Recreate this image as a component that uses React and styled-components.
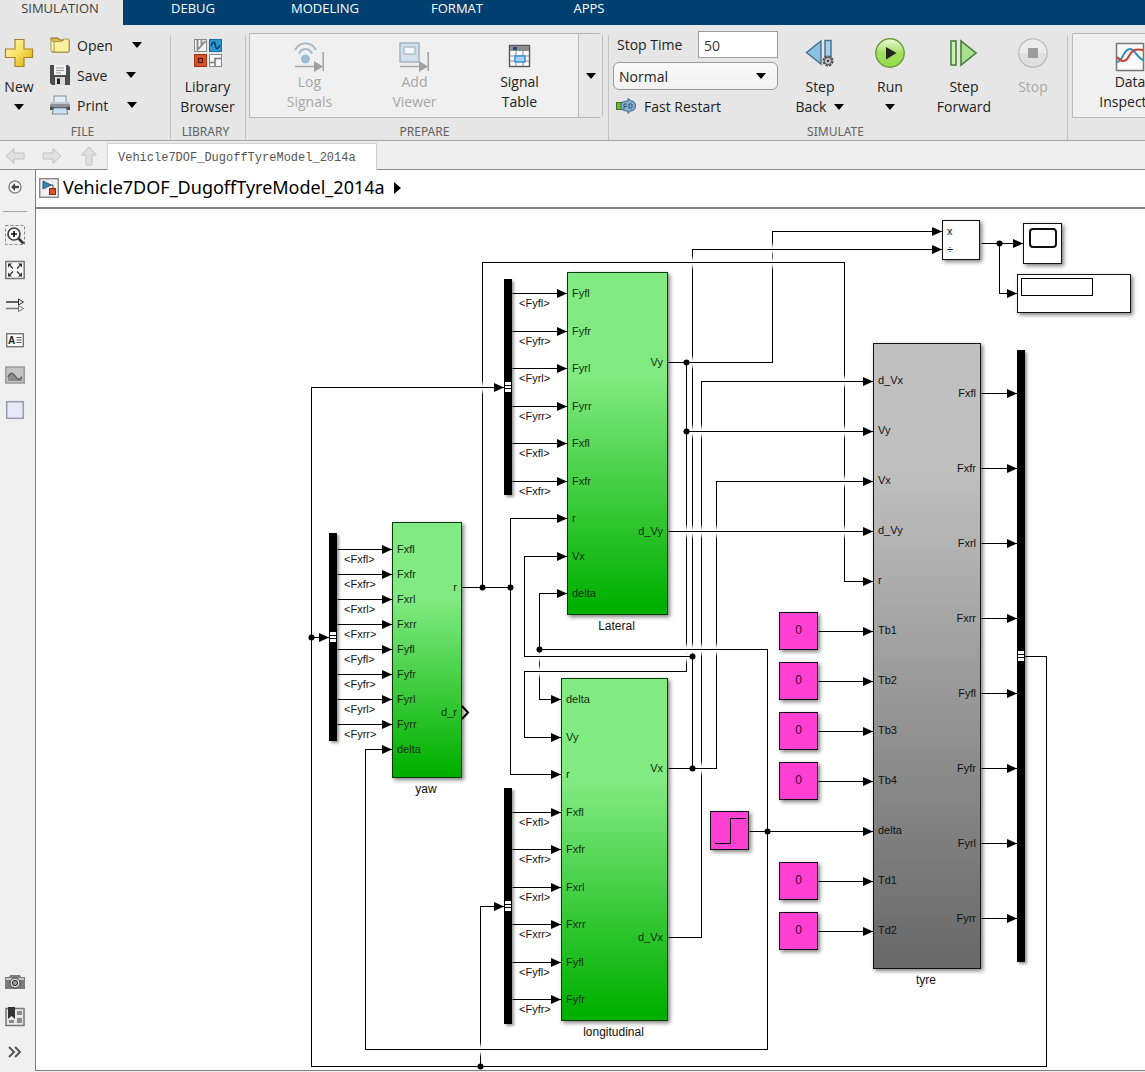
import React, { useState } from 'react';
import styled, { createGlobalStyle } from 'styled-components';

const GlobalStyle = createGlobalStyle`
  * {
    box-sizing: border-box;
  }
  body {
    margin: 0;
    background: #efefef;
    color: #1e1e1e;
    font-family: "Open Sans", "Noto Sans", sans-serif;
    font-size: 14px;
    overflow: hidden;
  }
  button {
    border: none;
    background: none;
    padding: 0;
    color: inherit;
    font: inherit;
    cursor: pointer;
  }
  svg {
    display: block;
    flex: none;
  }
`

const Page = styled.div`
  display: flex;
  flex-direction: column;
  min-height: 100vh;
`

const TabBar = styled.nav`
  display: flex;
  height: 25px;
  background: #004071;
`

const RibbonTab = styled.button`
  width: ${p => (p.$active ? 123 : 132)}px;
  margin-right: ${p => (p.$active ? 4 : 0)}px;
  padding: ${p => (p.$active ? '0 3px 9px 0' : '0 0 9px 0')};
  line-height: 16px;
  font-size: 13px;
  color: ${p => (p.$active ? '#3c3c3c' : '#fff')};
  background: ${p => (p.$active ? '#e7e7e7' : 'transparent')};
`

const Ribbon = styled.header`
  display: flex;
  height: 116px;
  background: #e6e6e6;
  border-bottom: 1px solid #a3a3a3;
  overflow: hidden;
`

const Group = styled.section`
  display: flex;
  flex-direction: column;
  flex: none;
  width: ${p => p.$width}px;
  background: linear-gradient(#c4c4c4, #c4c4c4) right bottom / 1px 105px no-repeat;
`

const GroupBody = styled.div`
  display: flex;
  align-items: flex-start;
  height: 98px;
  padding: ${p => p.$pad};
`

const GroupLabel = styled.div`
  line-height: 18px;
  height: 17px;
  font-family: "Noto Sans", sans-serif;
  font-size: 12px;
  padding-right: 6px;
  text-align: center;
  color: #626262;
`

const BigButton = styled.button`
  display: flex;
  flex-direction: column;
  align-items: center;
  flex: none;
  width: ${p => p.$width}px;
  line-height: 20px;
  color: ${p => (p.disabled ? '#a8a8a8' : '#222')};
  svg.icon {
    margin-bottom: ${p => (p.$gallery ? 0 : 9)}px;
  }
`

const CaretLine = styled.span`
  display: flex;
  align-items: center;
  justify-content: center;
  gap: 8px;
  height: 20px;
`

const NewButton = styled(BigButton)`
  margin-top: 8px;
`

const FileList = styled.div`
  display: flex;
  flex-direction: column;
  padding-left: 12px;
`

const FileButton = styled.button`
  display: flex;
  align-items: center;
  height: 30px;
  span {
    margin: 0 19px 0 7px;
  }
`

const Gallery = styled.div`
  display: flex;
  flex: none;
  width: ${p => p.$width}px;
  height: 85px;
  background: #f0f0f0;
  border: 1px solid #b9b9b9;
  border-radius: 0 4px 4px 0;
`

const GalleryItems = styled.div`
  display: flex;
  flex: 1;
  padding: 8px 0 0 7px;
`

const GalleryMore = styled.button`
  display: flex;
  align-items: center;
  justify-content: center;
  width: 24px;
  background: #e8e8e8;
  border-left: 1px solid #b9b9b9;
`

const SimForm = styled.form`
  display: flex;
  flex-direction: column;
  width: 165px;
  margin-right: 7px;
`

const StopRow = styled.div`
  display: flex;
  align-items: center;
  justify-content: space-between;
  padding-left: 4px;
`

const StopInput = styled.input`
  width: 80px;
  height: 27px;
  padding: 2px 5px 0;
  border: 1px solid #9d9d9d;
  background: #fff;
  font: inherit;
  color: #333;
`

const SelectBox = styled.div`
  display: grid;
  margin-top: 4px;
  align-items: center;
  > * {
    grid-area: 1 / 1;
  }
  svg {
    justify-self: end;
    margin-right: 12px;
    pointer-events: none;
  }
`

const ModeSelect = styled.select`
  appearance: none;
  width: 100%;
  height: 28px;
  padding: 0 5px;
  border: 1px solid #9a9a9a;
  border-radius: 6px;
  background: linear-gradient(#fafafa, #f1f1f1);
  font: inherit;
  color: #222;
`

const RestartButton = styled.button`
  display: flex;
  align-items: center;
  gap: 8px;
  height: 32px;
  padding-left: 3px;
`

const RunControls = styled.div`
  display: flex;
  padding-top: 7px;
`

const FileBar = styled.div`
  display: flex;
  height: 29px;
  background: #efefef;
  border-bottom: 1px solid #8a8a8a;
`

const NavButtons = styled.div`
  display: flex;
  align-items: center;
  gap: 17px;
  width: 107px;
  padding: 2px 0 0 5px;
`

const FileTab = styled.button`
  margin-top: 2px;
  padding: 2px 10px 0;
  height: 27px;
  width: 270px;
  text-align: left;
  border: 1px solid #d0d0d0;
  border-bottom: none;
  background: #fff;
  font-family: "Liberation Mono", monospace;
  font-size: 12px;
  color: #555;
`

const Workspace = styled.div`
  display: flex;
  flex: 1;
`

const Palette = styled.aside`
  display: flex;
  flex-direction: column;
  align-items: center;
  width: 35px;
  padding: 8px 5px 10px 0;
  gap: 15px;
  background: #f0f0f0;
`

const PaletteRule = styled.hr`
  width: 24px;
  margin: -2px 0;
  border: none;
  border-top: 1px solid #a8a8a8;
`

const PaletteSpacer = styled.div`
  flex: 1;
`

const Editor = styled.main`
  display: flex;
  flex-direction: column;
  flex: 1;
  min-width: 0;
  margin-bottom: 1px;
  border: 1px solid #808080;
  border-width: 0 0 1px 1px;
`

const Breadcrumb = styled.div`
  display: flex;
  align-items: center;
  gap: 4px;
  height: 39px;
  padding: 0 0 2px 3px;
  font-family: "Noto Sans", sans-serif;
  font-size: 18px;
  line-height: 22px;
  color: #000;
  background: #fff;
  border-bottom: 2px solid #868686;
  svg:last-child {
    margin-left: 5px;
  }
`

const Crumb = styled.a`
  padding-bottom: 2px;
  color: inherit;
  text-decoration: none;
`

// free canvas: blocks are placed by their sheet coordinates
const Canvas = styled.div`
  position: relative;
  flex: 1;
  min-height: 861px;
  overflow: hidden;
  background: #fff;
  font-family: "Liberation Sans", Arial, sans-serif;
  font-size: 11px;
  line-height: 12px;
  color: #111;
`

const Sheet = styled.div`
  position: absolute;
  left: -36px;
  top: -209px;
  width: 1200px;
  height: 1100px;
`

const Wires = styled.svg`
  position: absolute;
  left: 0;
  top: 0;
`

const fills = {
  green: 'linear-gradient(#82ea82 0%, #82ea82 30%, #00b000 98%)',
  gray: 'linear-gradient(#c0c0c0 0%, #c0c0c0 20%, #6a6a6a 98%)',
  pink: '#ff40d2',
  white: '#fff',
}

const Block = styled.div`
  position: absolute;
  left: ${p => p.$x}px;
  top: ${p => p.$y}px;
  width: ${p => p.$w}px;
  height: ${p => p.$h}px;
  display: flex;
  align-items: center;
  justify-content: center;
  border: 1px solid ${p => (p.$fill === 'green' ? '#0a3a0a' : '#111')};
  background: ${p => fills[p.$fill]};
  box-shadow: 2px 2px 4px rgba(0, 0, 0, 0.5);
`

const ConstantValue = styled.span`
  padding-bottom: 2px;
  font-size: 12px;
  color: #400030;
`

const BlockName = styled.div`
  position: absolute;
  left: ${p => p.$x}px;
  top: ${p => p.$y}px;
  width: ${p => p.$w}px;
  text-align: center;
  font-size: 12px;
  line-height: 14px;
`

const Port = styled.span`
  position: absolute;
  ${p => (p.$out ? 'right: 4px;' : 'left: 4px;')}
  top: ${p => p.$y}px;
  color: ${p => (p.$dark ? '#111' : '#103010')};
`

const Bar = styled.div`
  position: absolute;
  left: ${p => p.$x}px;
  top: ${p => p.$y}px;
  width: 8px;
  height: ${p => p.$h}px;
  background: #000;
  box-shadow: 2px 2px 3px rgba(0, 0, 0, 0.4);
`

const Notch = styled.svg`
  position: absolute;
  left: 0;
  top: ${p => p.$y}px;
`

const SignalLabel = styled.span`
  position: absolute;
  left: ${p => p.$x}px;
  top: ${p => p.$y}px;
`

const ScreenFace = styled.div`
  align-self: flex-start;
  margin-top: 4px;
  width: 28px;
  height: 20px;
  border: 2px solid #111;
  border-radius: 4px;
`

const DisplayFace = styled.div`
  align-self: flex-start;
  margin: 3px auto 0 3px;
  width: 72px;
  height: 18px;
  border: 1px solid #000;
`

const Caret = () => (
  <svg width="10" height="6" viewBox="0 0 10 6"><path d="M0 0h10L5 6z" fill="#000" /></svg>
)

const NewIcon = () => (
  <svg className="icon" width="30" height="30" viewBox="0 0 30 30">
    <defs>
      <linearGradient id="gold" x1="0" y1="0" x2="1" y2="1">
        <stop offset="0" stopColor="#fff8c0" />
        <stop offset="0.5" stopColor="#f8e060" />
        <stop offset="1" stopColor="#d8a800" />
      </linearGradient>
    </defs>
    <path d="M11 1.500h9v9.500h8.500v8.500H20v9h-9v-9H1.500V11H11z" fill="url(#gold)" stroke="#a8822a" strokeWidth="1.200" />
  </svg>
)

const OpenIcon = () => (
  <svg width="20" height="18" viewBox="0 0 20 18">
    <path d="M1 2h7l2 2h9v12H2z" fill="#d8b850" stroke="#8a7020" />
    <path d="M3 6l10-1 .5-2L19 3v13H4z" fill="#fbf0a0" stroke="#a08838" strokeWidth=".8" />
    <path d="M1 2l3 5v10L1 14z" fill="#fff6bc" stroke="#a08838" strokeWidth=".8" />
  </svg>
)

const SaveIcon = () => (
  <svg width="20" height="20" viewBox="0 0 20 20">
    <path d="M0 0h18l2 2v18H2l-2-2z" fill="#4c4c4c" />
    <path d="M4 0h12v10H4z" fill="#f4f4f4" />
    <path d="M6 3h8M6 5.500h8M6 8h5" stroke="#999" />
    <path d="M5 12h10v8H5z" fill="#d8d8d8" />
    <path d="M7 13.500h3V19H7z" fill="#222" />
  </svg>
)

const PrintIcon = () => (
  <svg width="20" height="20" viewBox="0 0 20 20">
    <path d="M4 1h12v8H4z" fill="#e4f0f8" stroke="#7e8e9a" />
    <path d="M2 7h16l2 3v5H0v-5z" fill="#8a9096" />
    <path d="M2 7h16l1 2H1z" fill="#c4c8cc" />
    <path d="M0 12h20v3H0z" fill="#4a4e52" />
    <path d="M4 13h12l2 6H2z" fill="#c8e0f4" stroke="#7e8e9a" />
  </svg>
)

const LibraryIcon = () => (
  <svg className="icon" width="30" height="30" viewBox="0 0 30 30">
    <rect x="1.500" y="1.500" width="12" height="12" fill="#f2f2f2" stroke="#8a8a8a" />
    <path d="M4.500 2v10l8-9M8.500 2v5" fill="none" stroke="#888" strokeWidth="1.800" />
    <rect x="16.500" y="1.500" width="12" height="12" fill="#2c96cc" stroke="#1c6c9c" />
    <path d="M18 8c2-6 4-4 4.500 0s3 3 4.500-1" fill="none" stroke="#0a3c64" strokeWidth="1.500" />
    <rect x="1.500" y="16.500" width="12" height="12" fill="#d8502c" stroke="#a03418" />
    <rect x="5.500" y="20.500" width="4" height="4" fill="none" stroke="#5c1404" strokeWidth="1.200" />
    <rect x="16.500" y="16.500" width="12" height="12" fill="#f6f6f6" stroke="#8a8a8a" />
    <path d="M17 24.500h5v-4h6M22 25v3" fill="none" stroke="#777" strokeWidth="1.500" />
  </svg>
)

const SinkArrow = () => (
  <g fill="none" stroke="#a6a6a6" strokeWidth="1.600">
    <path d="M1 24.500h20M29.200 10v19" />
    <path d="M20 19v11l9-5.500z" fill="#a0a0a0" stroke="none" />
  </g>
)

const LogIcon = () => (
  <svg className="icon" width="31" height="30" viewBox="0 0 31 30">
    <g fill="none" stroke="#a8bccb" strokeWidth="2.200">
      <path d="M1 8C6-1 17-1 22 8" />
      <path d="M5 11.500c3-6 10-6 13 0" />
    </g>
    <circle cx="11.500" cy="17" r="4.500" fill="#9cbcd2" />
    <SinkArrow />
  </svg>
)

const ViewerIcon = () => (
  <svg className="icon" width="31" height="30" viewBox="0 0 31 30">
    <rect x="1" y="1" width="19" height="19" fill="#d3e0ea" stroke="#a3b3c0" strokeWidth="1.500" />
    <rect x="5" y="5" width="11" height="7" fill="#f4f7fa" stroke="#a3b3c0" strokeWidth="1.200" />
    <SinkArrow />
  </svg>
)

const TableIcon = () => (
  <svg className="icon" width="31" height="30" viewBox="0 0 31 30">
    <rect x="5.500" y="3.500" width="20" height="21" fill="#fff" stroke="#555" strokeWidth="1.400" />
    <path d="M6 4h19v5H6z" fill="#8c8c8c" />
    <rect x="9" y="5" width="4" height="3" fill="#1c4c8c" />
    <path d="M6 14h19M6 19h19M12 9v15M19 9v15" stroke="#888" />
    <rect x="11" y="14" width="10" height="6" fill="#a8d4ff" stroke="#3c8cdc" strokeWidth="1.500" />
  </svg>
)

const RestartIcon = () => (
  <svg width="20" height="16" viewBox="0 0 20 16">
    <rect x="0.500" y="4.500" width="6" height="7" fill="#6cb43c" stroke="#3c7420" />
    <path d="M5 8c0-4 3-5 7-5V.500L15 3c3 0 4.500 2 4.500 5s-2 5-5 5L12 15.500V13c-4 0-7-1-7-5z" fill="#86aed0" stroke="#3c6488" />
    <path d="M8 11V6h3M8 8.500h3M13 6v4h3V6h-3" fill="none" stroke="#2c5478" />
  </svg>
)

const StepBackIcon = () => (
  <svg className="icon" width="30" height="30" viewBox="0 0 30 30">
    <path d="M16 3v23L1.500 14.500z" fill="#8cc0e0" stroke="#44708c" strokeWidth="1.400" />
    <rect x="20" y="2.500" width="6" height="20" fill="#a4d0ec" stroke="#44708c" strokeWidth="1.400" />
    <circle cx="23" cy="23" r="4.500" fill="#ddd" stroke="#4c4c4c" strokeWidth="2" strokeDasharray="2.500 1" />
    <circle cx="23" cy="23" r="3.500" fill="#ddd" stroke="#4c4c4c" />
    <circle cx="23" cy="23" r="1.400" fill="#444" />
  </svg>
)

const RunIcon = () => (
  <svg className="icon" width="30" height="30" viewBox="0 0 30 30">
    <defs>
      <linearGradient id="run" x1="0" y1="0" x2="0" y2="1">
        <stop offset="0" stopColor="#ecfadc" />
        <stop offset="0.5" stopColor="#a4e060" />
        <stop offset="1" stopColor="#94dc44" />
      </linearGradient>
    </defs>
    <circle cx="15" cy="15" r="14.200" fill="url(#run)" stroke="#6c9c3c" strokeWidth="1.400" />
    <path d="M11 9v12.500L21.500 15z" fill="#222" />
  </svg>
)

const StepForwardIcon = () => (
  <svg className="icon" width="30" height="30" viewBox="0 0 30 30">
    <rect x="2" y="3" width="5" height="24" fill="#c8f0b4" stroke="#4c7c40" strokeWidth="1.600" />
    <path d="M12 3v24l15-12z" fill="#a8e08c" stroke="#4c7c40" strokeWidth="1.600" />
  </svg>
)

const StopIcon = () => (
  <svg className="icon" width="30" height="30" viewBox="0 0 30 30">
    <circle cx="15" cy="15" r="14.200" fill="#e0e0e0" stroke="#b8b8b8" strokeWidth="1.200" />
    <path d="M1.500 15a13.500 13.500 0 0 1 27 0z" fill="#ececec" />
    <rect x="10" y="10" width="10" height="10" fill="#9c9c9c" />
  </svg>
)

const InspectorIcon = () => (
  <svg className="icon" width="30" height="30" viewBox="0 0 30 30">
    <rect x="1.500" y="1.500" width="27" height="27" fill="#fafafa" stroke="#777" strokeWidth="1.500" />
    <path d="M2 20c6 0 6-13 13-13 5 0 7 9 13 11" fill="none" stroke="#2c8cc4" strokeWidth="2" />
    <path d="M2 15c5 6 9 5 12-1 3-5 5-8 14-6" fill="none" stroke="#cc3c34" strokeWidth="2" />
  </svg>
)

const NavArrow = ({ turn = 0 }) => (
  <svg width="20" height="20" viewBox="0 0 20 20">
    <path d="M1 10l8-7.500V7h10v6H9v4.500z" fill="#e0e0e0" stroke="#c4c4c4" transform={`rotate(${turn} 10 10)`} />
  </svg>
)

const ModelIcon = () => (
  <svg width="20" height="20" viewBox="0 0 20 20">
    <rect x="0.700" y="0.700" width="18.600" height="18.600" fill="#f0f0f0" stroke="#8a8a8a" strokeWidth="1.400" />
    <path d="M4 3v8l8-4z" fill="#3c88b4" stroke="#20587c" />
    <path d="M11 7h3v4" fill="none" stroke="#444" />
    <rect x="10.500" y="10.500" width="6" height="6" fill="#d8502c" stroke="#8c2c10" />
  </svg>
)

const NextIcon = () => (
  <svg width="7" height="12" viewBox="0 0 7 12"><path d="M0 0v12l7-6z" /></svg>
)

const BackCircle = () => (
  <svg width="20" height="20" viewBox="0 0 20 20">
    <circle cx="10" cy="9" r="6" fill="#fff" stroke="#888" strokeWidth="1.500" />
    <path d="M6 9l4-4v2.800h4v2.400h-4V13z" fill="#444" />
  </svg>
)

const ZoomIcon = () => (
  <svg width="20" height="20" viewBox="0 0 20 20">
    <path d="M.5 .5h19v19H.5z" fill="none" stroke="#888" strokeDasharray="3 2" />
    <path d="M13 13l5.500 5.500" stroke="#333" strokeWidth="2.500" />
    <circle cx="9" cy="9" r="6" fill="#fff" stroke="#444" strokeWidth="1.700" />
    <path d="M9 6v6M6 9h6" stroke="#111" strokeWidth="1.700" />
  </svg>
)

const FitIcon = () => (
  <svg width="20" height="20" viewBox="0 0 20 20">
    <rect x=".8" y="1.500" width="18.400" height="17" fill="#f6f6f6" stroke="#777" strokeWidth="1.500" />
    <path d="M3 3.500h4L3 7.500zM17 3.500h-4l4 4zM3 16.500h4l-4-4zM17 16.500h-4l4-4z" fill="#333" />
    <path d="M5 5.500l3 3M15 5.500l-3 3M5 14.500l3-3M15 14.500l-3-3" stroke="#333" strokeWidth="1.200" />
  </svg>
)

const LinesIcon = () => (
  <svg width="20" height="20" viewBox="0 0 20 20">
    <path d="M1 7h13" stroke="#333" strokeWidth="1.500" />
    <path d="M1 13.500h13" stroke="#777" strokeWidth="1.500" />
    <path d="M13.500 4l5 3-5 3z" fill="#eee" stroke="#333" />
    <path d="M13.500 10.500l5 3-5 3z" fill="#eee" stroke="#777" />
  </svg>
)

const NoteIcon = () => (
  <svg width="20" height="20" viewBox="0 0 20 20">
    <rect x="1.700" y="3.700" width="16.600" height="13" fill="#fafafa" stroke="#777" strokeWidth="1.400" />
    <text x="3" y="14" fontSize="10" fontWeight="700" fontFamily="Liberation Sans" fill="#222">A</text>
    <path d="M11.500 7.500h5M11.500 10h5M11.500 12.500h5" stroke="#555" />
  </svg>
)

const ImageIcon = () => (
  <svg width="20" height="20" viewBox="0 0 20 20">
    <rect x=".8" y="2" width="18.400" height="16" fill="#c4c4c4" stroke="#999" strokeWidth="1.500" />
    <path d="M3 13c3-8 6-4 8-1s4 2 6-1v5H3z" fill="#8c8c8c" />
    <path d="M3 12c3-6 5-4 8 0s4 2 6 0" fill="none" stroke="#555" strokeWidth="1.200" />
  </svg>
)

const AreaIcon = () => (
  <svg width="20" height="20" viewBox="0 0 20 20">
    <rect x="1.700" y="1.700" width="16.600" height="16.600" fill="#e8e8fa" stroke="#9a9aac" strokeWidth="1.500" />
  </svg>
)

const CameraIcon = () => (
  <svg width="20" height="20" viewBox="0 0 20 20">
    <path d="M0 5h4l1-2h10l1 2h4v12H0z" fill="#7c7c7c" />
    <path d="M1 6h18v2H1z" fill="#c8c8c8" />
    <circle cx="10" cy="11" r="5" fill="#e0e0e0" stroke="#444" />
    <circle cx="10" cy="11" r="2.700" fill="#999" stroke="#333" />
  </svg>
)

const BookmarkIcon = () => (
  <svg width="20" height="20" viewBox="0 0 20 20">
    <rect x="1" y="1.500" width="18" height="17" fill="#e8e8e8" stroke="#777" strokeWidth="1.500" />
    <path d="M3 0h7v12l-3.500-3L3 12z" fill="#333" />
    <path d="M12 4h5v4h-5zM12 11h5v5h-5zM4 13h5v3H4z" fill="#8a8a8a" />
  </svg>
)

const MoreIcon = () => (
  <svg width="20" height="20" viewBox="0 0 20 20">
    <path d="M4 5l5 5-5 5M10 5l5 5-5 5" fill="none" stroke="#555" strokeWidth="2" />
  </svg>
)

const yawIn = ['Fxfl', 'Fxfr', 'Fxrl', 'Fxrr', 'Fyfl', 'Fyfr', 'Fyrl', 'Fyrr', 'delta'].map((name, i) => ({ name, y: 549 + 25 * i }))
const latIn = ['Fyfl', 'Fyfr', 'Fyrl', 'Fyrr', 'Fxfl', 'Fxfr', 'r', 'Vx', 'delta'].map((name, i) => ({ name, y: Math.floor(293.5 + 37.5 * i) }))
const lonIn = ['delta', 'Vy', 'r', 'Fxfl', 'Fxfr', 'Fxrl', 'Fxrr', 'Fyfl', 'Fyfr'].map((name, i) => ({ name, y: Math.floor(699.5 + 37.5 * i) }))
const tyreIn = ['d_Vx', 'Vy', 'Vx', 'd_Vy', 'r', 'Tb1', 'Tb2', 'Tb3', 'Tb4', 'delta', 'Td1', 'Td2'].map((name, i) => ({ name, y: 380 + 50 * i }))
const tyreOut = ['Fxfl', 'Fxfr', 'Fxrl', 'Fxrr', 'Fyfl', 'Fyfr', 'Fyrl', 'Fyrr'].map((name, i) => ({ name, y: 393 + 75 * i }))

const subsystems = [
  { name: 'yaw', x: 392, y: 522, w: 70, h: 256, fill: 'green', ins: yawIn, outs: [{ name: 'r', y: 587 }, { name: 'd_r', y: 712 }] },
  { name: 'Lateral', x: 567, y: 272, w: 101, h: 343, fill: 'green', ins: latIn, outs: [{ name: 'Vy', y: 362 }, { name: 'd_Vy', y: 531 }] },
  { name: 'longitudinal', x: 561, y: 678, w: 107, h: 343, fill: 'green', ins: lonIn, outs: [{ name: 'Vx', y: 768 }, { name: 'd_Vx', y: 937 }] },
  { name: 'tyre', x: 873, y: 343, w: 108, h: 626, fill: 'gray', ins: tyreIn, outs: tyreOut },
]

const constants = [631, 681, 731, 781, 881, 931]

const selectors = [
  { x: 329, y: 533, h: 208, to: 392, notch: 637, taps: yawIn.slice(0, 8) },
  { x: 504, y: 279, h: 216, to: 567, notch: 387, taps: latIn.slice(0, 6) },
  { x: 504, y: 788, h: 236, to: 561, notch: 906, taps: lonIn.slice(3) },
]

// every net is a list of polylines, each one finishing in an arrow head
const nets = [
  { lines: [[462, 587, 510, 587, 510, 518, 567, 518], [510, 587, 510, 774, 561, 774], [482, 587, 482, 262, 844, 262, 844, 581, 873, 581]], dots: [[482, 587], [510, 587]] },
  { lines: [[668, 362, 772, 362, 772, 231, 942, 231], [686, 362, 686, 671, 524, 671, 524, 737, 561, 737], [686, 431, 873, 431]], dots: [[686, 362], [686, 431]] },
  { lines: [[668, 768, 716, 768, 716, 481, 873, 481], [692, 768, 692, 249, 942, 249], [692, 656, 524, 656, 524, 556, 567, 556]], dots: [[692, 768], [692, 656]] },
  { lines: [[668, 937, 701, 937, 701, 381, 873, 381]], dots: [] },
  { lines: [[668, 531, 873, 531]], dots: [] },
  { lines: [[749, 831, 873, 831], [767, 831, 767, 649, 539, 649, 539, 593, 567, 593], [539, 649, 539, 699, 561, 699], [767, 831, 767, 1049, 365, 1049, 365, 749, 392, 749]], dots: [[767, 831], [539, 649]] },
  { lines: [[1024, 656, 1046, 656, 1046, 1066, 311, 1066, 311, 387, 504, 387], [311, 637, 329, 637], [480, 1066, 480, 906, 504, 906]], dots: [[311, 637], [480, 1066]] },
  { lines: [[981, 243, 1023, 243], [999, 243, 999, 293, 1017, 293]], dots: [[999, 243]] },
  ...constants.map(y => ({ lines: [[818, y, 873, y]], dots: [] })),
  ...tyreOut.map(o => ({ lines: [[981, o.y, 1017, o.y]], dots: [] })),
  ...selectors.flatMap(s => s.taps.map(t => ({ lines: [[s.x + 8, t.y, s.to, t.y]], dots: [] }))),
]

const segments = nets.flatMap((net, n) => net.lines.flatMap(p => {
  const list = []
  for (let i = 0; i + 3 < p.length; i += 2) {
    list.push({ n, x1: p[i], y1: p[i + 1], x2: p[i + 2], y2: p[i + 3] })
  }
  return list
}))

const horizontal = segments.filter(s => s.y1 === s.y2)
const vertical = segments.filter(s => s.x1 === s.x2)

// a vertical wire fades out where a wire of another net runs across it
const crossings = vertical.flatMap(v => horizontal
  .filter(h => h.n !== v.n
    && v.x1 > Math.min(h.x1, h.x2) && v.x1 < Math.max(h.x1, h.x2)
    && h.y1 > Math.min(v.y1, v.y2) && h.y1 < Math.max(v.y1, v.y2))
  .map(h => [v.x1, h.y1]))

function WireLayer() {
  const line = (s, i) => <line key={i} x1={s.x1 + 0.5} y1={s.y1 + 0.5} x2={s.x2 + 0.5} y2={s.y2 + 0.5} />
  return (
    <Wires width="1200" height="1100" viewBox="0 0 1200 1100">
      <defs>
        <linearGradient id="fade" x1="0" y1="0" x2="0" y2="1">
          <stop offset="0" stopColor="#fff" stopOpacity="0" />
          <stop offset="0.4" stopColor="#fff" />
          <stop offset="0.6" stopColor="#fff" />
          <stop offset="1" stopColor="#fff" stopOpacity="0" />
        </linearGradient>
      </defs>
      <g stroke="#000" strokeLinecap="square">{vertical.map(line)}</g>
      {crossings.map(([x, y]) => <rect key={`${x}-${y}`} x={x - 1} y={y - 7} width="3" height="15" fill="url(#fade)" />)}
      <g stroke="#000">{horizontal.map(line)}</g>
      {nets.flatMap(net => net.lines).map(p => {
        const [x, y] = p.slice(-2)
        return <path key={`${x}-${y}`} d={`M${x} ${y + 0.5}l-10-4.500v9z`} />
      })}
      {nets.flatMap(net => net.dots).map(([x, y]) => <circle key={`${x}-${y}`} cx={x + 0.5} cy={y + 0.5} r="3" />)}
      <path d="M462 706l6 6.500-6 6.500" fill="none" stroke="#000" strokeWidth="2" />
    </Wires>
  )
}

function BusBar({ x, y, h, notch }) {
  return (
    <Bar $x={x} $y={y} $h={h}>
      <Notch $y={notch - y - 6} width="8" height="12" viewBox="0 0 8 12">
        <path d="M1 1h6v10H1z" fill="#fff" />
        <path d="M1 4.500h6M1 7.500h6" stroke="#000" />
      </Notch>
    </Bar>
  )
}

function Diagram() {
  return (
    <Canvas>
      <Sheet>
        {selectors.map(s => <BusBar key={s.notch} {...s} />)}
        <BusBar x={1017} y={350} h={612} notch={656} />
        {subsystems.map(b => (
          <React.Fragment key={b.name}>
            <Block $x={b.x} $y={b.y} $w={b.w} $h={b.h} $fill={b.fill}>
              {b.ins.map(p => <Port key={p.name} $y={p.y - b.y - 7} $dark={b.fill === 'gray'}>{p.name}</Port>)}
              {b.outs.map(p => <Port key={p.name} $out $y={p.y - b.y - 7} $dark={b.fill === 'gray'}>{p.name}</Port>)}
            </Block>
            <BlockName $x={b.x - 21} $y={b.y + b.h + 4} $w={b.w + 40}>{b.name}</BlockName>
          </React.Fragment>
        ))}
        {constants.map(y => (
          <Block key={y} $x={779} $y={y - 19} $w={39} $h={38} $fill="pink"><ConstantValue>0</ConstantValue></Block>
        ))}
        <Block $x={710} $y={811} $w={39} $h={39} $fill="pink">
          <svg width="32" height="28" viewBox="0 0 32 28"><path d="M1 26.500h15.500v-25H32" fill="none" stroke="#000" /></svg>
        </Block>
        <Block $x={942} $y={220} $w={38} $h={40} $fill="white">
          <Port $y={4} $dark>x</Port>
          <Port $y={22} $dark>÷</Port>
        </Block>
        <Block $x={1023} $y={223} $w={39} $h={41} $fill="white"><ScreenFace /></Block>
        <Block $x={1017} $y={274} $w={114} $h={39} $fill="white"><DisplayFace /></Block>
        <WireLayer />
        {selectors.flatMap(s => s.taps.map(t => (
          <SignalLabel key={`${s.notch}${t.name}`} $x={s.x + 15} $y={t.y + 4}>{`<${t.name}>`}</SignalLabel>
        )))}
      </Sheet>
    </Canvas>
  )
}

function App() {
  const [stopTime, setStopTime] = useState('50');
  const [mode, setMode] = useState('Normal');

  return (
    <Page>
      <GlobalStyle />
      <TabBar>
        {['SIMULATION', 'DEBUG', 'MODELING', 'FORMAT', 'APPS'].map((name, i) => (
          <RibbonTab key={name} $active={i === 0}>{name}</RibbonTab>
        ))}
      </TabBar>
      <Ribbon>
        <Group $width={171}>
          <GroupBody $pad="5px 0 0">
            <NewButton $width={38}><NewIcon />New<CaretLine><Caret /></CaretLine></NewButton>
            <FileList>
              <FileButton><OpenIcon /><span>Open</span><Caret /></FileButton>
              <FileButton><SaveIcon /><span>Save</span><Caret /></FileButton>
              <FileButton><PrintIcon /><span>Print</span><Caret /></FileButton>
            </FileList>
          </GroupBody>
          <GroupLabel>FILE</GroupLabel>
        </Group>
        <Group $width={75}>
          <GroupBody $pad="13px 0 0">
            <BigButton $width={73}><LibraryIcon />Library<br />Browser</BigButton>
          </GroupBody>
          <GroupLabel>LIBRARY</GroupLabel>
        </Group>
        <Group $width={363}>
          <GroupBody $pad="8px 0 0 3px">
            <Gallery $width={354}>
              <GalleryItems>
                <BigButton $gallery $width={105} disabled><LogIcon />Log<br />Signals</BigButton>
                <BigButton $gallery $width={105} disabled><ViewerIcon />Add<br />Viewer</BigButton>
                <BigButton $gallery $width={105}><TableIcon />Signal<br />Table</BigButton>
              </GalleryItems>
              <GalleryMore aria-label="More"><Caret /></GalleryMore>
            </Gallery>
          </GroupBody>
          <GroupLabel>PREPARE</GroupLabel>
        </Group>
        <Group $width={459}>
          <GroupBody $pad="6px 0 0 4px">
            <SimForm onSubmit={e => e.preventDefault()}>
              <StopRow>
                <label htmlFor="stop-time">Stop Time</label>
                <StopInput id="stop-time" value={stopTime} onChange={e => setStopTime(e.target.value)} />
              </StopRow>
              <SelectBox>
                <ModeSelect aria-label="Simulation mode" value={mode} onChange={e => setMode(e.target.value)}>
                  <option>Normal</option>
                  <option>Accelerator</option>
                </ModeSelect>
                <Caret />
              </SelectBox>
              <RestartButton type="button"><RestartIcon />Fast Restart</RestartButton>
            </SimForm>
            <RunControls>
              <BigButton $width={70}><StepBackIcon />Step<CaretLine>Back <Caret /></CaretLine></BigButton>
              <BigButton $width={70}><RunIcon />Run<CaretLine><Caret /></CaretLine></BigButton>
              <BigButton $width={78}><StepForwardIcon />Step<br />Forward</BigButton>
              <BigButton $width={60} disabled><StopIcon />Stop</BigButton>
            </RunControls>
          </GroupBody>
          <GroupLabel>SIMULATE</GroupLabel>
        </Group>
        <Group $width={400}>
          <GroupBody $pad="8px 0 0 4px">
            <Gallery $width={354}>
              <GalleryItems>
                <BigButton $gallery $width={100}><InspectorIcon />Data<br />Inspector</BigButton>
              </GalleryItems>
            </Gallery>
          </GroupBody>
        </Group>
      </Ribbon>
      <FileBar>
        <NavButtons>
          <button aria-label="Back"><NavArrow /></button>
          <button aria-label="Forward"><NavArrow turn={180} /></button>
          <button aria-label="Up"><NavArrow turn={90} /></button>
        </NavButtons>
        <FileTab>Vehicle7DOF_DugoffTyreModel_2014a</FileTab>
      </FileBar>
      <Workspace>
        <Palette>
          <button aria-label="Hide browser"><BackCircle /></button>
          <PaletteRule />
          <button aria-label="Zoom"><ZoomIcon /></button>
          <button aria-label="Fit to view"><FitIcon /></button>
          <button aria-label="Signal lines"><LinesIcon /></button>
          <button aria-label="Annotation"><NoteIcon /></button>
          <button aria-label="Image"><ImageIcon /></button>
          <button aria-label="Area"><AreaIcon /></button>
          <PaletteSpacer />
          <button aria-label="Screenshot"><CameraIcon /></button>
          <button aria-label="Bookmarks"><BookmarkIcon /></button>
          <button aria-label="Show more"><MoreIcon /></button>
        </Palette>
        <Editor>
          <Breadcrumb>
            <ModelIcon />
            <Crumb href="#model">Vehicle7DOF_DugoffTyreModel_2014a</Crumb>
            <NextIcon />
          </Breadcrumb>
          <Diagram />
        </Editor>
      </Workspace>
    </Page>
  );
}

export default App;
